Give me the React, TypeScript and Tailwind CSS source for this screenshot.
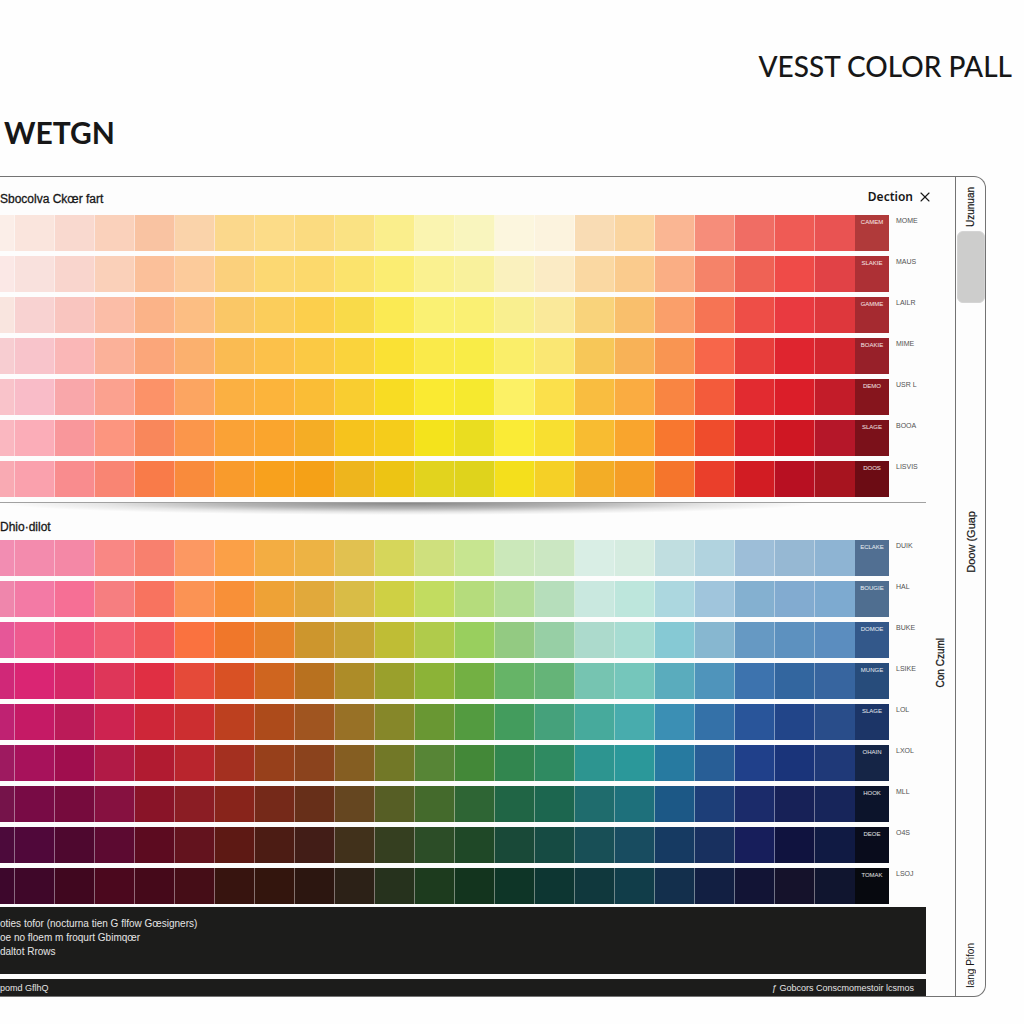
import React from "react";
import { X } from "lucide-react";

type Row = { tag: string; code: string; colors: string };

const warmRows: Row[] = [
  { tag: "CAMEM", code: "MOME", colors: "fbeee8 fae5dd f9d9cf fad1bb f9c3a2 fad3aa fbd88c fcdc88 fbdb80 fae283 faee8c faf4b0 f9f5be fcf6de fcf3de f9dcb4 fad5a0 fab693 f68d7a f06d64 ef5b55 e95352 b03a3a" },
  { tag: "SLAKIE", code: "MAUS", colors: "fbe8e6 f9e1dd f9d5cd fad0b9 fbc09a fccb9b fbd07c fcd872 fcd96c fbe36c fbed72 faf190 f9f19c faf1be fbebc5 fad8a2 facb8d faae84 f58369 ef6255 ef4b48 e14246 ad3035" },
  { tag: "GAMME", code: "LAILR", colors: "f9e5df f8d2d1 f9c5bf fbbda7 fbb388 fcbe83 fac766 fbcd5b fccf4c f9da49 fbea53 faf173 faf073 f9ef8f fae99a f9d37b f9bf6c fa9f6a f67454 ee4e47 e93a40 de373c a52a30" },
  { tag: "BOAKIE", code: "MIME", colors: "f7cdd1 f8c4cb fab7b7 fbb199 fba67a fbb06e fabb52 fcc14a fbc944 fad33c fae134 faea4a f9ec47 faee69 fae773 f7c758 f8b257 f99552 f7664a e83e3b df252f d3262f 972029" },
  { tag: "DEMO", code: "USR L", colors: "f9c3ca f9bcc8 f9a7aa fba18f fc9268 fca561 fbb042 fcb43b fabd36 f9cd30 f8dc23 faea32 f6e92f fcf165 fbe04b f9bd40 faac41 f98542 f35b3b e22b30 db1e29 c31c29 86151d" },
  { tag: "SLAGE", code: "BOOA", colors: "fab7c0 fbadb8 f9979b fc957f f9875b fb964b faa236 faa52d f5ad25 f6c31d f5cc1b f4e31c eadd20 faeb36 f8df30 f8bc31 f9a52d f8772f ef4c2c dc242a cf1723 b51729 7b111a" },
  { tag: "DOOS", code: "LISVIS", colors: "f9aab3 faa1ad f98c8e f98573 f97b49 f98b3c f99b2c f8a11d f5a117 eeb51d edc414 e2d31e dfd31c f4df1c f5d026 f3ad26 f59e26 f5752c ea3f2b d21c23 b81022 a7141f 6c0c14" },
];

const coolRows: Row[] = [
  { tag: "ECLAKE", code: "DUIK", colors: "f28db2 f38bad f488a6 f98784 f8806e fc9862 fba047 f3ad42 edb344 e1c150 d6d65a cfe07d c7e590 cbe8ba cbe7c2 d9eee5 d5ece0 c0dee0 b1d3df 9dbed8 96b8d3 8eb4d3 516f92" },
  { tag: "BOUGIE", code: "HAL", colors: "ef86ac f37aa5 f66f95 f67e80 f8735f fb9354 f89038 eea236 e1a93b d9bc46 cfd044 c2dc60 b5dc7c b3dd98 b6debb c9e8df bde6dc acd7df a0c5dc 84b0d0 82abd0 7daad0 4f6e90" },
  { tag: "DOMOE", code: "BUKE", colors: "e65798 ee5a8f ee527c f25d72 f2585a fa723f f0772a e78229 cd962d c7a334 bfbd35 b0cb4b 99cf5e 93ca82 97cfa5 acdacc a7dcd2 86c9d4 87b7d0 6699c3 5d91bf 5b8dbf 33588a" },
  { tag: "MUNGE", code: "LSIKE", colors: "d02878 da2573 d62767 de3659 e02f43 e54a39 d95124 cf651f b8711f ad8c28 9aa02c 8cb337 73b043 66b467 65b478 76c4b1 75c6bb 5aacbd 4f94bb 3d73ae 33669f 37659f 274c7b" },
  { tag: "SLAGE", code: "LOL", colors: "bf2272 c51a65 bb1b58 cd2350 ce2638 cc2e30 bd401f ad4b1b a05520 987126 868729 699733 539b40 439c5d 45a17b 47aa9c 48acad 3b8fb4 3471a8 29559a 224589 294d8a 1c3567" },
  { tag: "OHAIN", code: "LXOL", colors: "9e1a60 a7125b a00e4e b11a46 b11b31 b9252d a43020 97401b 8b431d 855e22 727827 578536 438838 32864f 2f8a61 2d9590 2b989a 277aa0 285e96 20408a 1a347a 1f3978 152546" },
  { tag: "HOOK", code: "MLL", colors: "75134a 780b45 760b3d 861140 891428 8b1d24 88241b 752919 672f19 654620 565e25 446a2c 2e6534 206545 1c664f 1f6c6d 1e707b 1c5886 1d3e78 1b2b6a 172157 17255a 0c142b" },
  { tag: "DEOE", code: "O4S", colors: "4c0a3b 50083a 4e082f 5c0a31 5c0b20 63131e 5d1914 4c1c14 421d17 41311b 353f20 2c4d27 1f4827 194938 164b43 184f56 184c60 163a62 18305f 171e5b 10133f 101a43 090c1c" },
  { tag: "TOMAK", code: "LSOJ", colors: "3d072c 3f0729 40071f 4b081e 45091a 450d17 37140f 33150d 2c1610 2c2117 26321d 1d3b1e 13341e 0e3527 0d3632 10383d 113d49 132f4c 121f42 121435 15122b 10152f 07090f" },
];

function Swatches({ rows, name }: { rows: Row[]; name: string }) {
  return (
    <div className="flex flex-col gap-[5px]" role="list" aria-label={name}>
      {rows.map((row, r) => (
        <div key={r} role="listitem" className="grid h-9 grid-cols-[15fr_repeat(21,40fr)_34fr_37fr]">
          {row.colors.split(" ").map((color, c) => (
            <div
              key={c}
              className={
                c === 22
                  ? "pt-[3px] text-center text-[6px] leading-[8px] whitespace-nowrap text-white/90"
                  : c === 21
                    ? ""
                    : "border-r border-white/40"
              }
              style={{ backgroundColor: "#" + color }}
            >
              {c === 22 ? row.tag : null}
            </div>
          ))}
          <span className="pt-px pl-[7px] text-[7px] leading-[9px] whitespace-nowrap text-neutral-600">{row.code}</span>
        </div>
      ))}
    </div>
  );
}

function VerticalText({ children, className }: { children: string; className: string }) {
  return <span className={"rotate-180 whitespace-nowrap [writing-mode:vertical-rl] " + className}>{children}</span>;
}

export default function App() {
  return (
    <div className="min-h-screen overflow-hidden bg-[#fefefe] font-['Liberation_Sans',sans-serif] text-neutral-900">
      <header className="font-['Lato',sans-serif]">
        <p className="pt-[46px] pr-3 text-right text-[28px] leading-[40px] font-medium">VESST COLOR PALL</p>
        <h1 className="mt-[26px] pl-1 text-[30px] leading-[40px] font-bold">WETGN</h1>
      </header>

      <div className="mt-6 mr-[38px] flex overflow-hidden rounded-r-xl border border-l-0 border-neutral-500 bg-[#fdfdfd]">
        <main className="min-w-0 flex-1">
          <div className="flex h-[38px] items-center justify-between pt-1.5 pr-[22px]">
            <h2 className="text-[12px] leading-4 font-medium [-webkit-text-stroke:0.3px]">Sbocolva Ckœr fart</h2>
            <div className="flex items-center gap-1 pb-1">
              <span className="font-['Noto_Sans',sans-serif] text-[12px] leading-4 font-semibold">Dection</span>
              <button type="button" aria-label="Close" className="flex size-4 items-center justify-center">
                <X size={16} strokeWidth={1.6} />
              </button>
            </div>
          </div>

          <div className="grid grid-cols-[926fr_29fr]">
            <div className="min-w-0">
              <Swatches rows={warmRows} name="Warm colours" />
              <div className="mt-[5px] h-[38px] border-t border-neutral-400">
                <div className="h-3 w-[88%] bg-[radial-gradient(ellipse_50%_100%_at_50%_0%,#00000078,#00000048_45%,#00000018_75%,transparent)]" />
                <h2 className="pt-1 text-[12px] leading-4 font-medium [-webkit-text-stroke:0.3px]">Dhio·dilot</h2>
              </div>
              <Swatches rows={coolRows} name="Cool colours" />

              <div className="mt-[3px] h-[67px] overflow-hidden bg-[#1c1c1b] pt-[10px] text-[10px] leading-[14px] text-neutral-200">
                <p>oties tofor (nocturna tien G flfow Gœsigners)</p>
                <p>oe no floem m froqurt Gbimqœr</p>
                <p>daltot Rrows</p>
              </div>
              <footer className="mt-[5px] flex h-[17px] items-center justify-between bg-[#1c1c1b] pr-3 text-[9px] leading-3 text-neutral-200">
                <span>pomd GflhQ</span>
                <span>ƒ Gobcors Conscmomestoir lcsmos</span>
              </footer>
            </div>
            <div className="flex justify-center pt-[423px]">
              <VerticalText className="h-fit text-[10px] leading-3 font-medium [-webkit-text-stroke:0.3px]">Con Czuml</VerticalText>
            </div>
          </div>
        </main>

        <aside className="flex w-[30px] flex-col items-center border-l border-neutral-500">
          <VerticalText className="mt-2 h-[42px] text-[10px] leading-3 [-webkit-text-stroke:0.2px]">Uzunuan</VerticalText>
          <div className="mt-1 h-[72px] w-7 rounded-md border border-neutral-300 bg-[#cdcdcc]" />
          <VerticalText className="mt-[208px] text-[11px] leading-3 [-webkit-text-stroke:0.2px]">Doow (Guap</VerticalText>
          <VerticalText className="mt-auto mb-2 text-[10px] leading-3">Iang Pifon</VerticalText>
        </aside>
      </div>
    </div>
  );
}
